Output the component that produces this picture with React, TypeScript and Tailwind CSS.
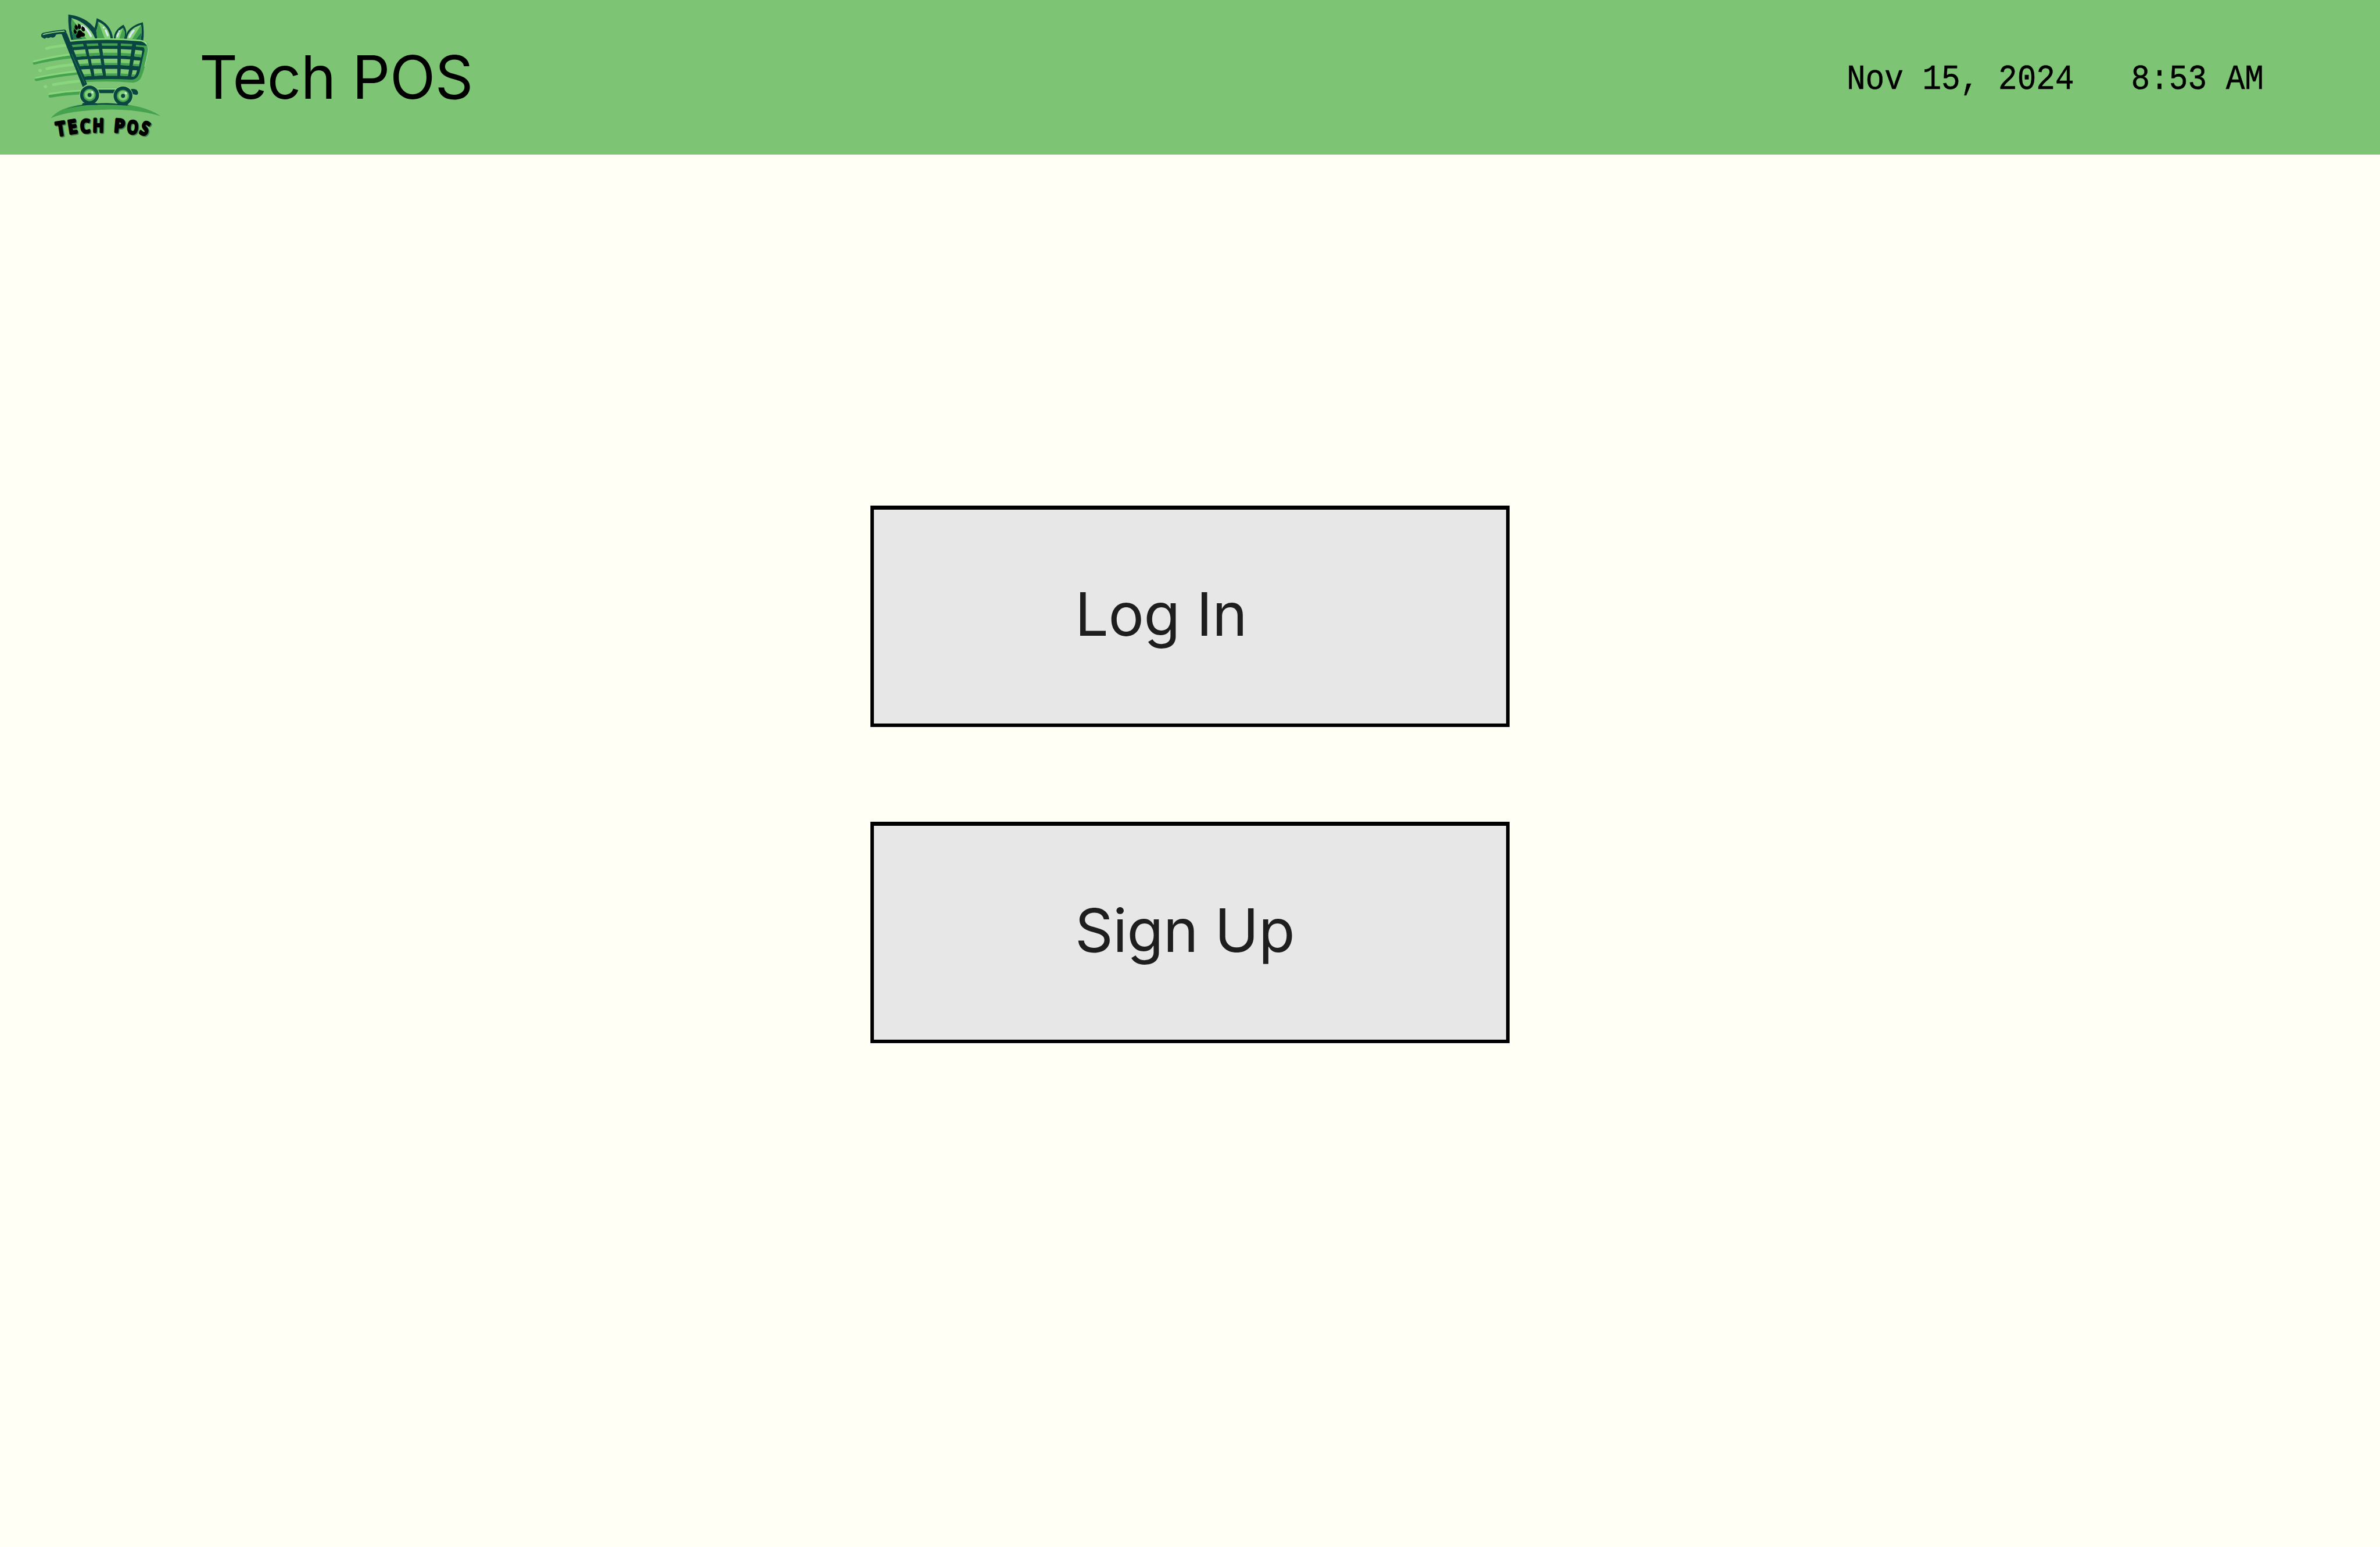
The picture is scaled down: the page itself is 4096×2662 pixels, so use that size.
type Letter = { char: string; x: number; y: number; rotate: number; sx: number; sy: number };

const wordmark: Letter[] = [
  { char: "T", x: 242, y: 800, rotate: -9, sx: 0.86, sy: 1 },
  { char: "E", x: 317, y: 788, rotate: -9, sx: 0.85, sy: 0.97 },
  { char: "C", x: 400, y: 784, rotate: -3, sx: 0.82, sy: 0.96 },
  { char: "H", x: 484, y: 779, rotate: 1, sx: 0.78, sy: 0.97 },
  { char: "P", x: 621, y: 782, rotate: 5, sx: 0.9, sy: 0.97 },
  { char: "O", x: 706, y: 791, rotate: 4, sx: 0.74, sy: 0.95 },
  { char: "S", x: 786, y: 798, rotate: 20, sx: 0.78, sy: 0.97 },
];

function Wordmark({ color, dx, dy }: { color: string; dx: number; dy: number }) {
  return (
    <g
      transform={`translate(${dx} ${dy})`}
      fill={color}
      stroke={color}
      strokeWidth="16"
      strokeLinejoin="round"
      fontFamily="'Open Sans', sans-serif"
      fontWeight="600"
      fontSize="121"
      textAnchor="middle"
    >
      {wordmark.map((l) => (
        <text key={l.char} transform={`translate(${l.x} ${l.y}) rotate(${l.rotate}) scale(${l.sx} ${l.sy})`} y="43">
          {l.char}
        </text>
      ))}
    </g>
  );
}

function Wheel({ x, y }: { x: number; y: number }) {
  return (
    <g transform={`translate(${x} ${y})`}>
      <circle r="61" fill="#0a4541" />
      <circle r="40" fill="#45a350" />
      <circle r="31" cy="-2" fill="#83d077" />
      <circle r="13" fill="#0a4541" />
      <ellipse cx="18" cy="-18" rx="6" ry="8" transform="rotate(-40 18 -18)" fill="#dfe6fb" />
    </g>
  );
}

function Logo() {
  return (
    <svg viewBox="0 0 930 930" className="h-[248px] w-[248px] shrink-0">
      {/* speed lines */}
      <g fill="none" strokeLinecap="round">
        <path d="M150 283Q210 267 275 263M152 414Q230 394 325 387M195 516Q280 500 370 493" stroke="#8ad67c" strokeWidth="18" />
        <path d="M72 369Q180 340 300 324M84 476Q200 450 345 432M172 578Q270 562 372 558" stroke="#8ad67c" strokeWidth="18" />
        <path d="M72 377Q180 350 305 337M84 483Q200 458 350 442M174 590Q270 574 372 568" stroke="#45a350" strokeWidth="20" />
        <path d="M68 368Q180 340 300 323M79 474Q200 448 345 433M168 578Q270 560 372 556" stroke="#8ad67c" strokeWidth="8" />
      </g>
      <circle cx="109" cy="425" r="11" fill="#8ad67c" />
      <circle cx="143" cy="529" r="11" fill="#8ad67c" />

      {/* leaves */}
      <path d="M291 64Q410 80 462 155L474 224L312 236Q287 155 291 64Z" fill="#0a4541" />
      <path d="M312 86Q425 120 465 220L326 224Q304 155 312 86Z" fill="#84d177" />
      <path d="M312 86L408 221L326 224Q304 155 312 86Z" fill="#45a350" />
      <path d="M316 178Q360 190 382 222L326 224Q318 200 316 178Z" fill="#1d7450" />
      <path d="M380 138Q415 155 436 202" fill="none" stroke="#dfe6fb" strokeWidth="13" strokeLinecap="round" />

      <path d="M474 87Q570 125 579 220L470 222L457 155Q466 140 474 87Z" fill="#0a4541" />
      <path d="M484 110Q552 140 564 219L478 219L471 168Q480 148 484 110Z" fill="#84d177" />
      <path d="M484 110L526 219H478L471 168Q480 148 484 110Z" fill="#45a350" />
      <circle cx="519" cy="148" r="6" fill="#dfe6fb" />
      <path d="M532 166L545 198" stroke="#dfe6fb" strokeWidth="12" strokeLinecap="round" />

      <path d="M647 129Q668 160 665 190L660 223H585Q583 165 647 129Z" fill="#0a4541" />
      <path d="M644 150Q658 175 656 190L651 221H595Q596 175 644 150Z" fill="#84d177" />
      <path d="M644 150Q658 175 656 190L651 221H619Z" fill="#45a350" />
      <circle cx="619" cy="171" r="5" fill="#dfe6fb" />
      <path d="M615 184L607 205" stroke="#dfe6fb" strokeWidth="9" strokeLinecap="round" />

      <path d="M772 113Q782 180 774 234L660 224Q658 145 772 113Z" fill="#0a4541" />
      <path d="M761 129Q768 180 758 226L668 222Q678 155 761 129Z" fill="#84d177" />
      <path d="M761 129Q768 180 758 228L702 223Z" fill="#45a350" />
      <path d="M762 182L757 228L727 226Z" fill="#1d7450" />
      <path d="M713 167Q697 182 685 209" fill="none" stroke="#dfe6fb" strokeWidth="12" strokeLinecap="round" />

      {/* paw */}
      <g>
        <ellipse cx="342" cy="147" rx="10" ry="15" transform="rotate(-12 342 147)" />
        <ellipse cx="362" cy="142" rx="10" ry="16" transform="rotate(-8 362 142)" />
        <ellipse cx="387" cy="158" rx="11" ry="15" transform="rotate(-18 387 158)" />
        <ellipse cx="335" cy="175" rx="9" ry="13" transform="rotate(-28 335 175)" />
        <path d="M336 135L337 125L344 134ZM354 130L353 120L362 129ZM378 146L380 136L388 146ZM328 165L325 151L336 164Z" />
        <path d="M355 169C368 158 378 172 384 180C394 182 402 190 397 201C390 209 378 203 369 210C360 218 345 218 341 206C339 195 350 190 349 180Z" />
      </g>

      {/* basket shadow and rim */}
      <path d="M300 234Q500 210 770 231Q815 242 808 290Q790 400 763 465Q750 500 710 503Q560 490 400 500L390 470L700 470L780 290L750 245Z" fill="#45a350" />
      <path d="M298 234Q530 210 750 231Q780 234 794 250" fill="none" stroke="#8ad67c" strokeWidth="10" strokeLinecap="round" />
      <path d="M782 240Q811 258 806 300Q798 345 783 400" fill="none" stroke="#a9dfb0" strokeWidth="4" />

      {/* basket body */}
      <path d="M298 240Q520 217 760 237Q788 245 796 266L758 264Q786 272 782 300L752 430Q740 482 700 484Q550 475 392 486Z" fill="#0a4541" />
      <g fill="#45a350">
        <path d="M312 260L386 253L391 269L320 275Z" />
        <path d="M408 252L482 249L486 265L413 268Z" />
        <path d="M505 249H609V265H509Z" />
        <path d="M630 250L704 254L701 268L630 266Z" />
        <path d="M728 259L796 266L770 275L727 271Z" />
      </g>
      <g fill="#80ca75">
        <path d="M325 294L400 289L408 332L342 337Z" />
        <path d="M419 288L488 285L495 327L428 332Z" />
        <path d="M510 285L608 286V328L516 327Z" />
        <path d="M630 287L699 291L692 332L630 328Z" />
        <path d="M723 292L765 296Q770 300 767 306L761 339L716 334Z" />
        <path d="M348 357L417 352L424 392L365 396Z" />
        <path d="M436 351L498 349L504 390L443 391Z" />
        <path d="M519 349H608V390H525Z" />
        <path d="M630 350L690 353L684 393L629 390Z" />
        <path d="M713 358L755 361L746 398L707 394Z" />
        <path d="M373 418L430 415L440 459L396 463Z" />
        <path d="M453 414L506 414L514 457L460 459Z" />
        <path d="M529 414H607V458H535Z" />
        <path d="M629 415L683 419L675 460L627 458Z" />
        <path d="M706 423L734 424Q728 457 713 464L698 463Z" />
      </g>
      <g fill="#45a350">
        <path d="M336 319L405 315L408 332L342 337ZM425 313L493 310L495 327L428 332ZM514 310H608V328H516ZM630 311L695 315L692 332L630 328ZM719 318L764 322L761 339L716 334Z" />
        <path d="M359 383L422 379L424 392L365 396ZM441 378L502 375L504 390H443ZM523 376H608V390H525ZM630 376L687 379L684 393L629 390ZM709 382L750 385L746 398L707 394Z" />
        <path d="M388 449L437 446L440 459L396 463ZM458 445L511 442L514 457L460 459ZM534 443H607V458H535ZM628 443L678 447L675 460L627 458ZM701 450L725 451L713 464L698 463Z" />
      </g>

      {/* handle and post */}
      <path d="M245 182H281L412 513L384 532Z" fill="#0a4541" />
      <path d="M313 318L398 508" stroke="#2f8a58" strokeWidth="3" />
      <path d="M267 160Q278 163 279 180L250 190Q225 189 212 193Q204 214 186 213Q177 207 171 213Q157 218 150 212Q140 226 128 215Q114 210 116 197Q117 184 132 181Q200 166 267 160Z" fill="#0a4541" />
      <path d="M125 197Q125 188 140 186Q205 172 264 167L270 174Q200 178 125 197Z" fill="#84d177" />

      {/* axle */}
      <path d="M480 537H602" stroke="#54a65a" strokeWidth="2" />
      <path d="M480 542H602" stroke="#8ed97f" strokeWidth="7" />
      <path d="M484 549H594V571H484Z" fill="#0a4541" />
      <path d="M695 545Q735 538 741 568Q742 580 730 582L700 576Z" fill="#0a4541" />

      {/* wheel halos, ground, wheels */}
      <circle cx="428" cy="583" r="65" fill="#8ed97f" />
      <circle cx="644" cy="589" r="65" fill="#8ed97f" />
      <path d="M178 732Q260 630 540 636Q770 640 886 719Q740 675 560 677Q300 680 178 732Z" fill="#45a350" />
      <path d="M266 678Q370 637 540 636Q620 638 690 653Q540 640 420 648Q330 655 266 678Z" fill="#0a4541" />
      <path d="M385 635H470L486 642L478 647H378ZM602 640H680L670 649H612Z" fill="#0a4541" />
      <Wheel x={428} y={583} />
      <Wheel x={644} y={589} />

      <Wordmark color="#4d8048" dx={6} dy={6} />
      <Wordmark color="#000000" dx={0} dy={0} />
    </svg>
  );
}

function ActionButton({ label }: { label: string }) {
  return (
    <button className="flex h-[381px] w-[1100px] items-center border-[6px] border-t-[7px] border-black bg-[#e7e7e7] pb-[8px] pl-[346px] text-left text-[102.4px] leading-[124px] tracking-[-0.45px] text-[#1e1e1e]">
      {label}
    </button>
  );
}

export default function App() {
  return (
    <div className="flex h-[2662px] w-[4096px] flex-col overflow-hidden bg-[#fffff5] font-['Inter',sans-serif] font-normal">
      <header className="flex h-[266px] shrink-0 items-start bg-[#7dc474] pr-[200px] pl-[40px] text-black">
        <div className="pt-[8px]">
          <Logo />
        </div>
        <h1 className="ml-[55px] pt-[71px] text-[102.4px] leading-[124px] tracking-[-0.5px] whitespace-nowrap">Tech POS</h1>
        <time className="mt-[102px] ml-auto block origin-top scale-y-[1.11] font-['Liberation_Mono',monospace] text-[54.4px] leading-[64px] whitespace-pre [-webkit-text-stroke:0.5px_black]">
          {"Nov 15, 2024   8:53 AM"}
        </time>
      </header>
      <main className="flex flex-col items-center gap-[163px] pt-[604px]">
        <ActionButton label="Log In" />
        <ActionButton label="Sign Up" />
      </main>
    </div>
  );
}
